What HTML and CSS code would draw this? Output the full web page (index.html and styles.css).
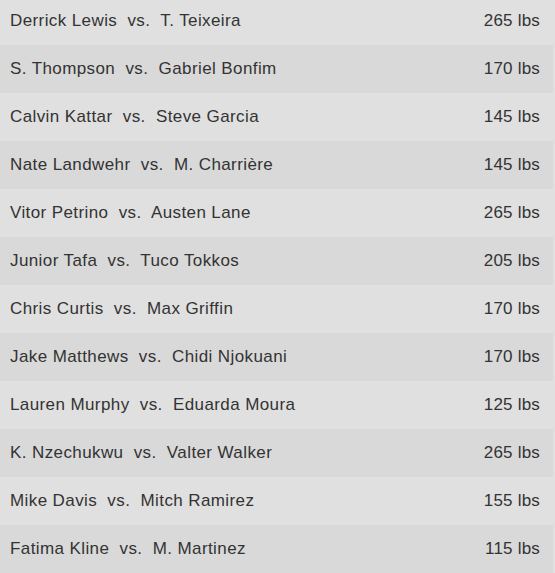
FILE: index.html
```html
<!DOCTYPE html>
<html>
<head>
<meta charset="utf-8">
<link rel="stylesheet" href="styles.css">
</head>
<body>
<div class="list">
  <div class="row"><span class="bout">Derrick Lewis  vs.  T. Teixeira</span><span class="weight">265 lbs</span></div>
  <div class="row"><span class="bout">S. Thompson  vs.  Gabriel Bonfim</span><span class="weight">170 lbs</span></div>
  <div class="row"><span class="bout">Calvin Kattar  vs.  Steve Garcia</span><span class="weight">145 lbs</span></div>
  <div class="row"><span class="bout">Nate Landwehr  vs.  M. Charrière</span><span class="weight">145 lbs</span></div>
  <div class="row"><span class="bout">Vitor Petrino  vs.  Austen Lane</span><span class="weight">265 lbs</span></div>
  <div class="row"><span class="bout">Junior Tafa  vs.  Tuco Tokkos</span><span class="weight">205 lbs</span></div>
  <div class="row"><span class="bout">Chris Curtis  vs.  Max Griffin</span><span class="weight">170 lbs</span></div>
  <div class="row"><span class="bout">Jake Matthews  vs.  Chidi Njokuani</span><span class="weight">170 lbs</span></div>
  <div class="row"><span class="bout">Lauren Murphy  vs.  Eduarda Moura</span><span class="weight">125 lbs</span></div>
  <div class="row"><span class="bout">K. Nzechukwu  vs.  Valter Walker</span><span class="weight">265 lbs</span></div>
  <div class="row"><span class="bout">Mike Davis  vs.  Mitch Ramirez</span><span class="weight">155 lbs</span></div>
  <div class="row"><span class="bout">Fatima Kline  vs.  M. Martinez</span><span class="weight">115 lbs</span></div>
</div>
</body>
</html>
```
FILE: styles.css
```css
html, body {
  margin: 0;
  padding: 0;
  background: #e0e0e0;
  overflow: hidden;
}
.list {
  width: 553px;
  margin-top: -3px;
  display: flex;
  flex-direction: column;
  font-family: "Liberation Sans", Arial, sans-serif;
  font-size: 17px;
  letter-spacing: 0.4px;
  color: #333333;
}
.row {
  height: 48px;
  display: flex;
  align-items: center;
  justify-content: space-between;
  padding: 0 13px 0 10px;
  box-sizing: border-box;
  background: #e0e0e0;
}
.row:nth-child(even) {
  background: #d9d9d9;
}
.bout {
  white-space: pre;
}
.weight {
  white-space: pre;
  letter-spacing: 0.2px;
}
```
